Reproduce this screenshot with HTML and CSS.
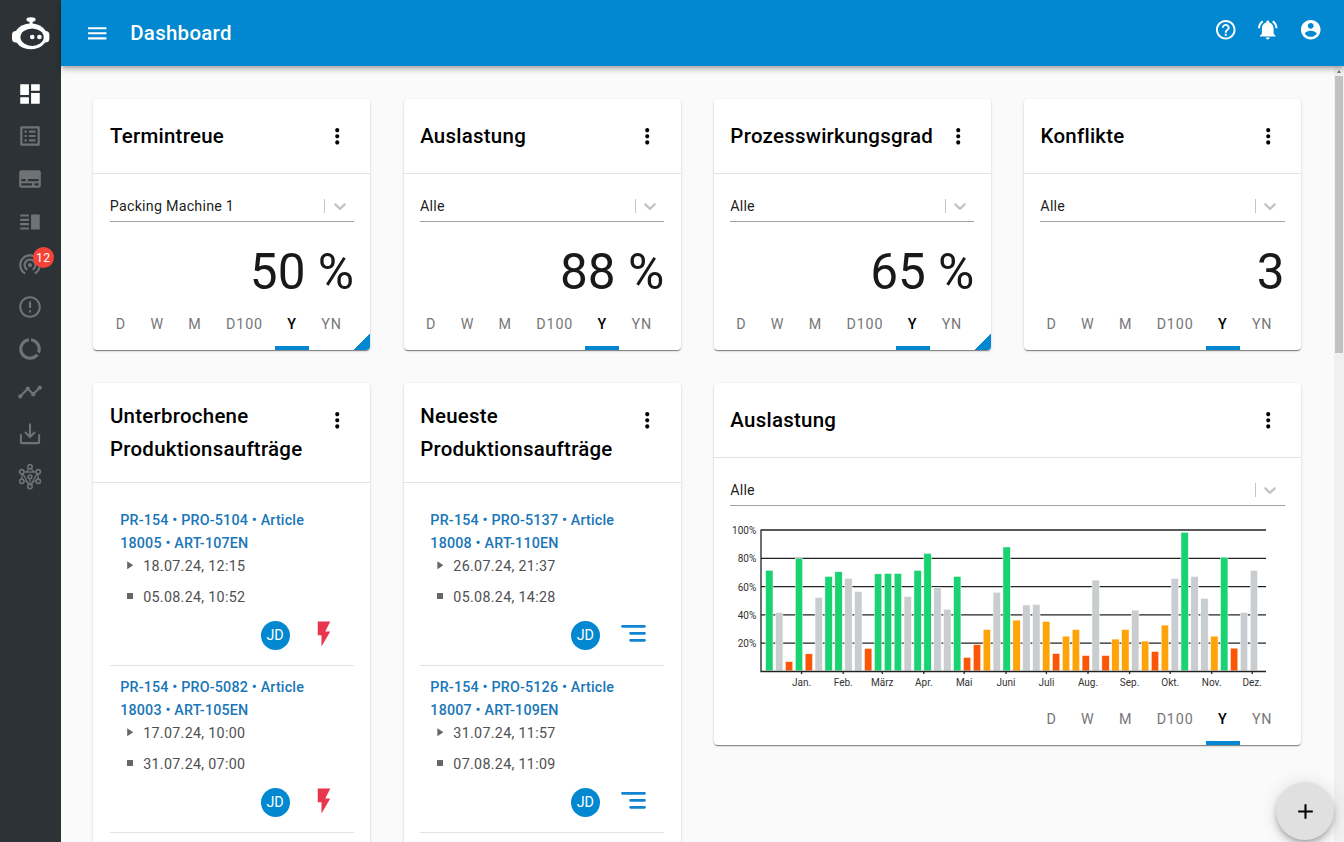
FILE: index.html
```html
<!DOCTYPE html>
<html lang="de">
<head>
  <meta charset="UTF-8">
  <meta name="viewport" content="width=device-width, initial-scale=1.0">
  <title>Dashboard</title>
  <link rel="stylesheet" href="styles.css">
</head>
<body>
  <!-- Shared icons -->
  <svg class="sprite" width="0" height="0">
    <symbol id="more" viewBox="0 0 24 24"><path d="M12 8c1.1 0 2-.9 2-2s-.9-2-2-2-2 .9-2 2 .9 2 2 2zm0 2c-1.1 0-2 .9-2 2s.9 2 2 2 2-.9 2-2-.9-2-2-2zm0 6c-1.1 0-2 .9-2 2s.9 2 2 2 2-.9 2-2-.9-2-2-2z"/></symbol>
    <symbol id="chevron" viewBox="0 0 20 20"><path d="M4.516 7.548c0.436-0.446 1.043-0.481 1.576 0l3.908 3.747 3.908-3.747c0.533-0.481 1.141-0.446 1.574 0 0.436 0.445 0.408 1.197 0 1.615-0.406 0.418-4.695 4.502-4.695 4.502-0.217 0.223-0.502 0.335-0.787 0.335s-0.57-0.112-0.789-0.335c0 0-4.287-4.084-4.695-4.502s-0.436-1.17 0-1.615z"/></symbol>
    <symbol id="bolt" viewBox="0 0 24 24"><path d="M7 2v11h3v9l7-12h-4l4-8z"/></symbol>
    <symbol id="lines" viewBox="0 0 30 30"><path d="M3.5 7.3h22M11.6 14.3h13.9M11.6 21.3h13.9" fill="none" stroke="currentColor" stroke-width="2.8" stroke-linecap="round"/></symbol>
  </svg>

  <aside class="sidebar">
    <svg class="logo" viewBox="0 0 38 33">
      <ellipse cx="19" cy="2.6" rx="4.6" ry="2.4" fill="#fff"/>
      <rect x="17.6" y="3" width="3" height="5" fill="#fff"/>
      <rect x="0" y="14" width="37.4" height="11.4" rx="4" fill="#fff"/>
      <ellipse cx="18.8" cy="19.3" rx="16.3" ry="12.9" fill="#fff"/>
      <ellipse cx="20.1" cy="20.2" rx="11.6" ry="8.7" fill="#2d3236"/>
      <circle cx="20.2" cy="20" r="2.3" fill="#fff"/>
      <circle cx="27.4" cy="20" r="2.3" fill="#fff"/>
    </svg>
    <nav class="nav">
      <a class="active"><svg viewBox="0 0 24 24"><path d="M3 13h8V3H3v10zm0 8h8v-6H3v6zm10 0h8V11h-8v10zm0-18v6h8V3h-8z"/></svg></a>
      <a><svg viewBox="0 0 24 24"><path d="M19 5v14H5V5h14m1.1-2H3.9c-.5 0-.9.4-.9.9v16.2c0 .4.4.9.9.9h16.2c.4 0 .9-.5.9-.9V3.9c0-.5-.5-.9-.9-.9zM11 7h6v2h-6V7zm0 4h6v2h-6v-2zm0 4h6v2h-6zM7 7h2v2H7zm0 4h2v2H7zm0 4h2v2H7z"/></svg></a>
      <a><svg viewBox="0 0 24 24"><path d="M20 4H4c-1.1 0-2 .9-2 2v12c0 1.1.9 2 2 2h16c1.1 0 2-.9 2-2V6c0-1.1-.9-2-2-2zM4 12h4v2H4v-2zm10 6H4v-2h10v2zm6 0h-4v-2h4v2zm0-4H10v-2h10v2z"/></svg></a>
      <a><svg viewBox="0 0 24 24"><path d="M3 15h8v-2H3v2zm0 4h8v-2H3v2zm0-8h8V9H3v2zm0-6v2h8V5H3zm10 0h8v14h-8V5z"/></svg></a>
      <a><svg viewBox="0 0 24 24"><path d="M12 11c-1.1 0-2 .9-2 2s.9 2 2 2 2-.9 2-2-.9-2-2-2zm6 2c0-3.31-2.69-6-6-6s-6 2.69-6 6c0 2.22 1.21 4.15 3 5.19l1-1.74c-1.19-.7-2-1.97-2-3.45 0-2.21 1.79-4 4-4s4 1.79 4 4c0 1.48-.81 2.75-2 3.45l1 1.74c1.79-1.04 3-2.97 3-5.19zM12 3C6.48 3 2 7.48 2 13c0 3.7 2.01 6.92 4.99 8.65l1-1.73C5.61 18.53 4 15.96 4 13c0-4.42 3.58-8 8-8s8 3.58 8 8c0 2.96-1.61 5.53-4 6.92l1 1.73c2.99-1.73 5-4.95 5-8.65 0-5.52-4.48-10-10-10z"/></svg><span class="badge">12</span></a>
      <a><svg viewBox="0 0 24 24"><path d="M11 15h2v2h-2zm0-8h2v6h-2zm.99-5C6.47 2 2 6.48 2 12s4.47 10 9.99 10C17.52 22 22 17.52 22 12S17.52 2 11.99 2zM12 20c-4.42 0-8-3.58-8-8s3.58-8 8-8 8 3.58 8 8-3.58 8-8 8z"/></svg></a>
      <a><svg viewBox="0 0 24 24"><path d="M13 2.05v3.03c3.39.49 6 3.39 6 6.92 0 .9-.18 1.75-.48 2.54l2.6 1.53c.56-1.24.88-2.62.88-4.07 0-5.18-3.95-9.45-9-9.95zM12 19c-3.87 0-7-3.13-7-7 0-3.53 2.61-6.43 6-6.92V2.05c-5.06.5-9 4.76-9 9.95 0 5.52 4.47 10 9.99 10 3.31 0 6.24-1.61 8.06-4.09l-2.6-1.53C16.17 17.98 14.21 19 12 19z"/></svg></a>
      <a><svg viewBox="0 0 24 24"><path d="M23 8c0 1.1-.9 2-2 2-.18 0-.35-.02-.51-.07l-3.56 3.55c.05.16.07.34.07.52 0 1.1-.9 2-2 2s-2-.9-2-2c0-.18.02-.36.07-.52l-2.55-2.55c-.16.05-.34.07-.52.07s-.36-.02-.52-.07l-4.55 4.56c.05.16.07.33.07.51 0 1.1-.9 2-2 2s-2-.9-2-2 .9-2 2-2c.18 0 .35.02.51.07l4.56-4.55C8.02 9.36 8 9.18 8 9c0-1.1.9-2 2-2s2 .9 2 2c0 .18-.02.36-.07.52l2.55 2.55c.16-.05.34-.07.52-.07s.36.02.52.07l3.55-3.56C19.02 8.35 19 8.18 19 8c0-1.1.9-2 2-2s2 .9 2 2z"/></svg></a>
      <a><svg viewBox="0 0 24 24"><path class="line" d="M3.6 12.3v7.2c0 .6.4.9.9.9h15c.6 0 .9-.4.9-.9v-7.2M12 2.4v12M7.4 10.2l4.6 4.6 4.6-4.6"/></svg></a>
      <a><svg viewBox="0 0 24 24"><g class="line thin"><path d="M12 2.6L8.6 7.4M12 2.6l3.4 4.8M4.6 7.4h14.8M4.6 7.4v8.4M19.4 7.4v8.4M4.6 15.8h4l3.4 5 3.4-5h4M4.6 7.4L12 20.8l7.4-13.4M12 12v8"/></g><g class="node"><circle cx="12" cy="2.6" r="2"/><circle cx="4.4" cy="7.2" r="2"/><circle cx="19.6" cy="7.2" r="2"/><circle cx="4.4" cy="16" r="2"/><circle cx="19.6" cy="16" r="2"/><circle cx="12" cy="20.8" r="2"/><circle cx="12" cy="11.8" r="1.7"/></g></svg></a>
    </nav>
  </aside>

  <div class="page">
    <header class="topbar">
      <svg class="menu" viewBox="0 0 24 24"><path d="M3 18h18v-2H3v2zm0-5h18v-2H3v2zm0-7v2h18V6H3z"/></svg>
      <h1>Dashboard</h1>
      <div class="actions">
        <svg viewBox="0 0 24 24"><path d="M11 18h2v-2h-2v2zm1-16C6.48 2 2 6.48 2 12s4.48 10 10 10 10-4.48 10-10S17.52 2 12 2zm0 18c-4.41 0-8-3.59-8-8s3.59-8 8-8 8 3.59 8 8-3.59 8-8 8zm0-14c-2.21 0-4 1.79-4 4h2c0-1.1.9-2 2-2s2 .9 2 2c0 2-3 1.75-3 5h2c0-2.25 3-2.5 3-5 0-2.21-1.79-4-4-4z"/></svg>
        <svg viewBox="0 0 24 24"><path d="M7.58 4.08L6.15 2.65C3.75 4.48 2.17 7.3 2.03 10.5h2c.15-2.65 1.51-4.97 3.55-6.42zm12.39 6.42h2c-.15-3.2-1.73-6.02-4.12-7.85l-1.42 1.43c2.02 1.45 3.39 3.77 3.54 6.42zM18 11c0-3.07-1.64-5.64-4.5-6.32V4c0-.83-.67-1.5-1.5-1.5s-1.5.67-1.5 1.5v.68C7.63 5.36 6 7.92 6 11v5l-2 2v1h16v-1l-2-2v-5zm-6 11c.14 0 .27-.01.4-.04.65-.14 1.18-.58 1.44-1.18.1-.24.15-.5.15-.78h-4c.01 1.1.9 2 2.01 2z"/></svg>
        <svg viewBox="0 0 24 24"><path d="M12 2C6.48 2 2 6.48 2 12s4.48 10 10 10 10-4.48 10-10S17.52 2 12 2zm0 3c1.66 0 3 1.34 3 3s-1.34 3-3 3-3-1.34-3-3 1.34-3 3-3zm0 14.2c-2.5 0-4.71-1.28-6-3.22.03-1.99 4-3.08 6-3.08 1.99 0 5.97 1.09 6 3.08-1.29 1.94-3.5 3.22-6 3.22z"/></svg>
      </div>
    </header>

    <div class="content">
      <main class="grid">
        <section class="card resizable">
          <div class="card-header"><h2>Termintreue</h2><svg class="more"><use href="#more"/></svg></div>
          <div class="card-body">
            <div class="select"><span>Packing Machine 1</span><svg><use href="#chevron"/></svg></div>
            <div class="value">50 %</div>
            <div class="tabs"><a>D</a><a>W</a><a>M</a><a>D100</a><a class="active">Y</a><a>YN</a></div>
          </div>
        </section>

        <section class="card">
          <div class="card-header"><h2>Auslastung</h2><svg class="more"><use href="#more"/></svg></div>
          <div class="card-body">
            <div class="select"><span>Alle</span><svg><use href="#chevron"/></svg></div>
            <div class="value">88 %</div>
            <div class="tabs"><a>D</a><a>W</a><a>M</a><a>D100</a><a class="active">Y</a><a>YN</a></div>
          </div>
        </section>

        <section class="card resizable">
          <div class="card-header"><h2>Prozesswirkungsgrad</h2><svg class="more"><use href="#more"/></svg></div>
          <div class="card-body">
            <div class="select"><span>Alle</span><svg><use href="#chevron"/></svg></div>
            <div class="value">65 %</div>
            <div class="tabs"><a>D</a><a>W</a><a>M</a><a>D100</a><a class="active">Y</a><a>YN</a></div>
          </div>
        </section>

        <section class="card">
          <div class="card-header"><h2>Konflikte</h2><svg class="more"><use href="#more"/></svg></div>
          <div class="card-body">
            <div class="select"><span>Alle</span><svg><use href="#chevron"/></svg></div>
            <div class="value">3</div>
            <div class="tabs"><a>D</a><a>W</a><a>M</a><a>D100</a><a class="active">Y</a><a>YN</a></div>
          </div>
        </section>

        <section class="card list-card">
          <div class="card-header"><h2>Unterbrochene Produktionsaufträge</h2><svg class="more"><use href="#more"/></svg></div>
          <div class="card-body">
            <div class="order">
              <a class="order-link">PR-154 • PRO-5104 • Article 18005 • ART-107EN</a>
              <div class="time start">18.07.24, 12:15</div>
              <div class="time end">05.08.24, 10:52</div>
              <div class="order-footer"><span class="avatar">JD</span><svg class="bolt"><use href="#bolt"/></svg></div>
            </div>
            <div class="order">
              <a class="order-link">PR-154 • PRO-5082 • Article 18003 • ART-105EN</a>
              <div class="time start">17.07.24, 10:00</div>
              <div class="time end">31.07.24, 07:00</div>
              <div class="order-footer"><span class="avatar">JD</span><svg class="bolt"><use href="#bolt"/></svg></div>
            </div>
          </div>
        </section>

        <section class="card list-card">
          <div class="card-header"><h2>Neueste Produktionsaufträge</h2><svg class="more"><use href="#more"/></svg></div>
          <div class="card-body">
            <div class="order">
              <a class="order-link">PR-154 • PRO-5137 • Article 18008 • ART-110EN</a>
              <div class="time start">26.07.24, 21:37</div>
              <div class="time end">05.08.24, 14:28</div>
              <div class="order-footer"><span class="avatar">JD</span><svg class="lines"><use href="#lines"/></svg></div>
            </div>
            <div class="order">
              <a class="order-link">PR-154 • PRO-5126 • Article 18007 • ART-109EN</a>
              <div class="time start">31.07.24, 11:57</div>
              <div class="time end">07.08.24, 11:09</div>
              <div class="order-footer"><span class="avatar">JD</span><svg class="lines"><use href="#lines"/></svg></div>
            </div>
          </div>
        </section>

        <section class="card wide">
          <div class="card-header"><h2>Auslastung</h2><svg class="more"><use href="#more"/></svg></div>
          <div class="card-body">
            <div class="select"><span>Alle</span><svg><use href="#chevron"/></svg></div>
            <svg class="chart" id="chart" width="554" height="189" viewBox="730 506 554 189"></svg>
            <div class="tabs"><a>D</a><a>W</a><a>M</a><a>D100</a><a class="active">Y</a><a>YN</a></div>
          </div>
        </section>
      </main>
      <div class="scrollbar"><span class="arrow"></span><span class="thumb"></span></div>
    </div>
  </div>

  <button class="fab"><svg viewBox="0 0 24 24"><path d="M19 13h-6v6h-2v-6H5v-2h6V5h2v6h6v2z"/></svg></button>

<script>
  // g = green, o = orange, r = red, n = neutral
  const bars = [
    ['g', 71.5], ['n', 41.7], ['r', 7], ['g', 80], ['r', 12.5], ['n', 52.4], ['g', 67.2], ['g', 70.5],
    ['n', 65.8], ['n', 56.6], ['r', 16.3], ['g', 69], ['g', 69.3], ['g', 69.3], ['n', 53], ['g', 71.5],
    ['g', 83.5], ['n', 59.2], ['n', 44], ['g', 67.2], ['r', 10], ['r', 19], ['o', 29.7], ['n', 56],
    ['g', 88], ['o', 36.3], ['n', 47], ['n', 47.4], ['o', 35.4], ['r', 12.7], ['o', 25], ['o', 29.7],
    ['r', 11.3], ['n', 64.6], ['r', 11.3], ['o', 22.9], ['o', 29.7], ['n', 43.4], ['o', 21.5], ['r', 14.2],
    ['o', 32.8], ['n', 65.8], ['g', 98.4], ['n', 67.2], ['n', 51.7], ['o', 25], ['g', 80.8], ['r', 16.5],
    ['n', 41.7], ['n', 71.5]
  ];
  const months = [
    ['Jan.', 801.6], ['Feb.', 843.2], ['März', 882.3], ['Apr.', 923.8], ['Mai', 964.2], ['Juni', 1006],
    ['Juli', 1046.4], ['Aug.', 1088], ['Sep.', 1129.6], ['Okt.', 1170.2], ['Nov.', 1211.7], ['Dez.', 1252.2]
  ];
  const left = 761, right = 1266, bottom = 671.5, height = 141.5;
  let out = '';

  // Grid lines with their labels
  for (let p = 20; p <= 100; p += 20) {
    const y = bottom - height * p / 100;
    out += `<line x1="${left}" x2="${right}" y1="${y}" y2="${y}"/>`;
    out += `<text class="y-label" x="756.3" y="${y + 3.9}">${p}%</text>`;
  }

  // Bars
  bars.forEach(([color, value], i) => {
    const h = height * value / 100;
    out += `<rect class="${color}" x="${765.6 + i * 9.89}" y="${bottom - h}" width="7.4" height="${h - .7}"/>`;
  });

  // Axes and months
  out += `<path d="M${left} 529.5V${bottom}H${right}" fill="none"/>`;
  months.forEach(([name, x]) => {
    out += `<line x1="${x}" x2="${x}" y1="${bottom}" y2="${bottom + 2.6}"/><text class="x-label" x="${x}" y="686">${name}</text>`;
  });

  document.getElementById('chart').innerHTML = out;
</script>
</body>
</html>
```
FILE: styles.css
```css
* {
  box-sizing: border-box;
}
body {
  margin: 0;
  height: 100vh;
  display: flex;
  overflow: hidden;
  background-color: #fafafa;
  font-family: Roboto, sans-serif;
  font-size: 14.3px;
  color: rgba(0, 0, 0, 0.9);
}
svg {
  display: block;
  fill: currentColor;
}
.sprite {
  position: absolute;
}

/* Sidebar */
.sidebar {
  width: 61px;
  flex-shrink: 0;
  background-color: #2d3236;
  color: #6f7375;
}
.logo {
  width: 38px;
  height: 33px;
  margin: 16.7px 0 0 11.8px;
}
.nav {
  margin-top: 31.2px;
  display: flex;
  flex-direction: column;
  align-items: center;
  gap: 16.55px;
  padding-right: 1.4px;
}
.nav a {
  position: relative;
}
.nav svg {
  width: 26px;
  height: 26px;
}
.nav .active {
  color: white;
}
.line {
  fill: none;
  stroke: currentColor;
  stroke-width: 1.9;
}
.thin {
  stroke-width: 1.2;
}
.node {
  fill: #2d3236;
  stroke: currentColor;
  stroke-width: 1.5;
}
.badge {
  position: absolute;
  top: -4px;
  right: -11px;
  width: 21px;
  height: 21px;
  border-radius: 50%;
  background-color: #f44336;
  color: white;
  font-size: 12.3px;
  line-height: 22px;
  letter-spacing: 0.3px;
  text-align: center;
}

/* Top bar */
.page {
  flex: 1;
  display: flex;
  flex-direction: column;
  min-width: 0;
}
.topbar {
  height: 66px;
  flex-shrink: 0;
  display: flex;
  align-items: center;
  padding: 0 22px 0 24px;
  background-color: #0288d1;
  color: white;
  box-shadow: 0 2px 4px -1px rgba(0, 0, 0, 0.2), 0 4px 5px rgba(0, 0, 0, 0.14), 0 1px 10px rgba(0, 0, 0, 0.12);
  z-index: 1;
}
.menu {
  width: 24.5px;
  height: 24.5px;
}
h1 {
  margin: 0 auto 0 20.7px;
  font-size: 20.45px;
  font-weight: 500;
  letter-spacing: 0.3px;
}
.actions {
  display: flex;
  gap: 19px;
  padding-bottom: 7px;
}
.actions svg {
  width: 23.5px;
  height: 23.5px;
}

/* Cards */
.content {
  flex: 1;
  display: flex;
  min-height: 0;
}
.grid {
  flex: 1;
  display: grid;
  grid-template-columns: repeat(4, 277px);
  grid-template-rows: 251px auto;
  align-items: start;
  gap: 33px 33.2px;
  padding: 33px 0 0 32.4px;
  overflow: hidden;
}
.card {
  position: relative;
  height: 251px;
  background-color: white;
  border-radius: 4px;
  box-shadow: 0 2px 1px -1px rgba(0, 0, 0, 0.3), 0 1px 1px rgba(0, 0, 0, 0.2), 0 1px 3px rgba(0, 0, 0, 0.14);
}
.list-card {
  height: 520px;
}
.wide {
  grid-column: span 2;
  height: 362px;
}
.resizable::after {
  content: "";
  position: absolute;
  right: 0;
  bottom: 0;
  width: 16.4px;
  height: 16.4px;
  border-bottom-right-radius: 4px;
  background: linear-gradient(135deg, transparent 50%, #0288d1 50%);
}
.card-header {
  display: flex;
  align-items: flex-start;
  justify-content: space-between;
  padding: 17px 20.6px 16px 16.6px;
  border-bottom: 1px solid #e3e3e3;
}
h2 {
  margin: 0;
  min-height: 41px;
  display: flex;
  align-items: center;
  font-size: 20.45px;
  line-height: 33px;
  font-weight: 500;
  letter-spacing: 0.26px;
  color: black;
}
.more {
  width: 24.5px;
  height: 24.5px;
  flex-shrink: 0;
  margin-top: 8px;
  color: black;
}
.card-body {
  padding: 16px 16.4px 0;
}
.select {
  display: flex;
  align-items: center;
  height: 32px;
  border-bottom: 1px solid #a0a0a0;
  letter-spacing: 0.22px;
}
.select span {
  flex: 1;
  display: flex;
  align-items: center;
  justify-content: space-between;
}
.select span::after {
  content: "";
  width: 1px;
  height: 14px;
  background-color: #c4c4c4;
}
.select svg {
  width: 20px;
  height: 20px;
  margin: 0 4.3px;
  color: #c4c4c4;
}
.value {
  padding-top: 20px;
  height: 78px;
  font-size: 49.5px;
  line-height: 60px;
  text-align: right;
}
.tabs {
  display: flex;
  justify-content: flex-end;
}
.tabs a {
  height: 50px;
  padding: 0 12.2px;
  line-height: 49px;
  letter-spacing: 0.85px;
  color: #777;
}
.tabs .active {
  color: black;
  font-weight: 500;
  border-bottom: 4px solid #0288d1;
}

/* Orders */
.order {
  height: 167px;
  padding: 10px 16px 0 10.4px;
  border-bottom: 1px solid #e3e3e3;
}
.order-link {
  display: block;
  color: #1976b8;
  font-weight: 500;
  line-height: 22.5px;
  letter-spacing: 0.18px;
}
.time {
  display: flex;
  align-items: center;
  height: 24.5px;
  margin-bottom: 6.2px;
  padding-left: 7px;
  letter-spacing: 0.3px;
  color: #505050;
}
.time::before {
  content: "";
  width: 6px;
  height: 6px;
  margin: 0 10px 2px 0;
  background-color: #666;
}
.start::before {
  height: 8px;
  clip-path: polygon(0 0, 100% 50%, 0 100%);
}
.order-footer {
  display: flex;
  align-items: flex-start;
  justify-content: flex-end;
  gap: 19px;
  margin: 9.5px -0.6px 0 0;
}
.avatar {
  width: 29px;
  height: 29px;
  margin-top: 2px;
  border-radius: 50%;
  background-color: #0288d1;
  color: white;
  line-height: 29px;
  text-align: center;
}
.order-footer svg {
  width: 30px;
  height: 30px;
}
.bolt {
  color: #e9364f;
}
.lines {
  color: #1285d0;
}

/* Chart */
.chart line,
.chart path {
  stroke: #222;
  stroke-width: 1.3;
}
.chart rect {
  stroke: white;
  stroke-width: 0.5;
}
.chart text {
  font-size: 10px;
  fill: #333;
}
.y-label {
  text-anchor: end;
}
.x-label {
  text-anchor: middle;
}
.g {
  fill: #19d271;
}
.o {
  fill: #ffa408;
}
.r {
  fill: #fb5607;
}
.n {
  fill: #c9cdcf;
}

/* Scrollbar */
.scrollbar {
  width: 10px;
  background-color: #f0f0f0;
  display: flex;
  flex-direction: column;
  align-items: center;
}
.arrow {
  margin: 4px 0 3px;
  border: 2.5px solid transparent;
  border-top: 0;
  border-bottom: 3px solid #777;
}
.thumb {
  width: 8px;
  height: 277px;
  background-color: #c1c1c1;
}

.fab {
  position: fixed;
  right: 10px;
  bottom: 2px;
  width: 58px;
  height: 58px;
  padding: 0;
  display: flex;
  align-items: center;
  justify-content: center;
  border: none;
  border-radius: 50%;
  background-color: #e0e0e0;
  color: black;
  box-shadow: 0 3px 5px -1px rgba(0, 0, 0, 0.2), 0 6px 10px rgba(0, 0, 0, 0.14), 0 1px 18px rgba(0, 0, 0, 0.12);
  z-index: 2;
}
.fab svg {
  width: 25px;
  height: 25px;
}
```
